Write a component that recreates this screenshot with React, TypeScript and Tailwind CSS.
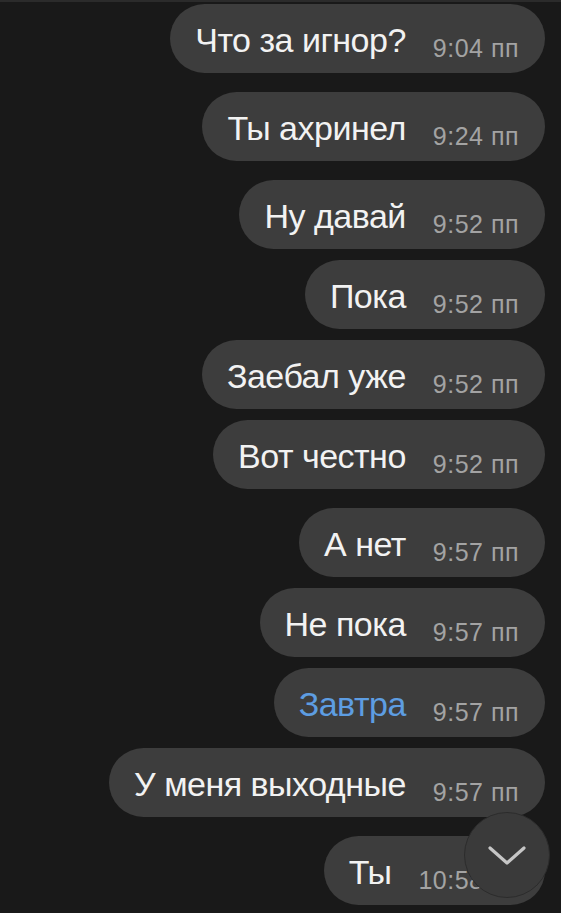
import React from 'react';

type Msg = { text: string; time: string; link?: boolean; gap?: boolean };

const messages: Msg[] = [
  { text: 'Что за игнор?', time: '9:04 пп' },
  { text: 'Ты ахринел', time: '9:24 пп', gap: true },
  { text: 'Ну давай', time: '9:52 пп', gap: true },
  { text: 'Пока', time: '9:52 пп' },
  { text: 'Заебал уже', time: '9:52 пп' },
  { text: 'Вот честно', time: '9:52 пп' },
  { text: 'А нет', time: '9:57 пп', gap: true },
  { text: 'Не пока', time: '9:57 пп' },
  { text: 'Завтра', time: '9:57 пп', link: true },
  { text: 'У меня выходные', time: '9:57 пп' },
  { text: 'Ты', time: '10:58 пп', gap: true },
];

function Bubble({ msg }: { msg: Msg }) {
  return (
    <div
      className={
        'flex h-[69px] items-center rounded-full bg-[#3d3d3d] pl-[25px] pr-[26px] ' +
        (msg.gap ? 'mt-[19px]' : 'mt-[11px]')
      }
    >
      <span
        className={
          'text-[34px] leading-[40px] tracking-[-0.5px] translate-y-[1px] ' +
          (msg.link ? 'text-[#5d9de2]' : 'text-[#f2f2f2]')
        }
      >
        {msg.text}
      </span>
      <span className="ml-[27px] whitespace-nowrap text-[25px] leading-[28px] tracking-[0.5px] text-[#a3a3a3] translate-y-[9px]">
        {msg.time}
      </span>
    </div>
  );
}

export default function App() {
  return (
    <div
      className="relative h-[913px] w-[561px] overflow-hidden bg-[#191919]"
      style={{ fontFamily: '"Liberation Sans", Arial, sans-serif' }}
    >
      <div className="h-[2px] bg-[#2b2b2b]" />

      {/* Messages */}
      <div className="flex flex-col items-end pr-[16px] pt-[2px] [&>*:first-child]:mt-0">
        {messages.map((m, i) => (
          <Bubble key={i} msg={m} />
        ))}
      </div>

      {/* Scroll to bottom */}
      <div className="absolute left-[464px] top-[812px] flex h-[86px] w-[86px] items-center justify-center rounded-full border border-[#2c2c2c] bg-[#3a3a3a]">
        <svg width="40" height="24" viewBox="0 0 40 24" fill="none" className="mt-[2px]">
          <path
            d="M3 4 L20 19 L37 4"
            stroke="#c6c6c6"
            strokeWidth="3.2"
            strokeLinecap="round"
            strokeLinejoin="round"
          />
        </svg>
      </div>
    </div>
  );
}
